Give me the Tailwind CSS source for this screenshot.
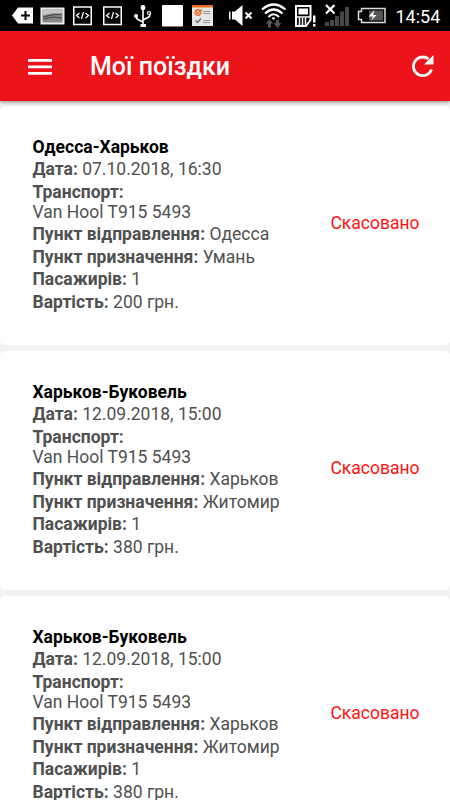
<!DOCTYPE html>
<html lang="uk">

<head>
    <meta charset="UTF-8">
    <meta name="viewport" content="width=device-width, initial-scale=1.0">
    <title>Мої поїздки</title>
    <script src="https://cdn.jsdelivr.net/npm/@tailwindcss/browser@4"></script>
</head>

<body class="bg-[#f2f2f2] font-[Roboto,sans-serif] h-screen overflow-hidden flex flex-col">
    <!-- status bar -->
    <div class="h-[31px] shrink-0 bg-black text-white flex items-center">
        <svg class="w-[290px] h-[31px] shrink-0" viewBox="0 0 290 31" fill="none">
            <path d="M12 15.500L18 7.500h15v16H18z" fill="#fff" />
            <path d="M25.500 11v9M21 15.500h9" stroke="#000" stroke-width="2" />
            <path d="M41.500 8.500h22v15h-22z" fill="#888" stroke="#eee" stroke-width="2" />
            <path d="M43 10h19v4l-8-1-11 2z" fill="#c8c8c8" />
            <path d="M43 17l9-2 10-1M43 19l10-2 9 1" stroke="#444" />
            <path d="M73.750 7h17.500v17.500H73.750zM103.750 7h17.500v17.500h-17.500z" stroke="#fff" stroke-width="1.500" />
            <path d="M79.500 13l-3 2.500 3 2.500M85.500 13l3 2.500-3 2.500M83.500 12l-2 7M109.500 13l-3 2.500 3 2.500M115.500 13l3 2.500-3 2.500M113.500 12l-2 7" stroke="#fff" stroke-width="1.200" />
            <path d="M143 7v19M143 22l-5-2.500q-2-1-2-3.500M143 20l5-2.500q2-1 2-3.500" stroke="#fff" stroke-width="1.600" />
            <path d="M140.500 9.500l2.500-4.500 2.500 4.500zM140.500 24h5.500v3h-5.500z" fill="#fff" />
            <circle cx="143" cy="7.500" r="2.400" fill="#fff" />
            <circle cx="136" cy="16" r="2" fill="#fff" />
            <circle cx="149" cy="13" r="1.500" stroke="#fff" stroke-width="1.200" />
            <rect x="162" y="5" width="21" height="21.500" rx="1" fill="#fff" />
            <path d="M192 5h21v21h-21z" fill="#e6e6e6" />
            <path d="M192 5h21v2.500h-21z" fill="#f26a1b" />
            <circle cx="198" cy="12.500" r="2.700" stroke="#f26a1b" stroke-width="1.500" />
            <path d="M196.500 12l1.500 1.500 4-4" stroke="#f26a1b" stroke-width="1.200" />
            <path d="M195.500 20.500l2 2 3.500-4" stroke="#666" stroke-width="1.200" />
            <path d="M203 11.500h7M203 13.500h7M203 20.500h7M203 22.500h7" stroke="#999" />
            <path d="M229 11.500h1.500v8H229zM232 11.500h3l7.500-6.500v21l-7.500-6.500h-3z" fill="#fff" />
            <path d="M245.500 12.500l6 6M251.500 12.500l-6 6" stroke="#fff" stroke-width="2" />
            <path d="M262 9.500q11.500-10 23.500 0M265 13.500q8.500-8 17.500 0M268.500 17q5-5.500 10.500 0" stroke="#fff" stroke-width="2.200" />
            <path d="M271.500 18q2-1.500 4 0l-2 2z" fill="#fff" />
            <path d="M265.500 23.500l4-4 4 4h-2.500v4h-3v-4zM273.500 23l4 5 4-5H279v-3h-3v3z" fill="#555" />
        </svg>
        <svg class="w-[96px] h-[31px] shrink-0" viewBox="290 0 96 31" fill="none">
            <path d="M296 6h14.500v14l-4.500 6h-10z" stroke="#fff" stroke-width="2" />
            <path d="M298.500 8.500h9.500v6h-9.500z" fill="#fff" />
            <path d="M296 17h14M299.500 18v8M302.500 18v8M305.500 18v7" stroke="#fff" stroke-width="1.500" />
            <path d="M313 15.500h2.500v7H313zM313 24h2.500v2.500H313z" fill="#fff" />
            <path d="M325 22h4v4h-4zM330 20h4v6h-4zM335 16h4v10h-4zM340 11.500h4V26h-4zM345 7h4v19h-4z" fill="#484848" />
            <path d="M326 5l8.500 8.500M334.500 5L326 13.500" stroke="#fff" stroke-width="2.200" />
            <path d="M361.500 8.500h23.500v14h-23.500v-3h-3v-8h3z" stroke="#ddd" stroke-width="1.500" />
            <path d="M369 10.500h14v10h-14z" fill="#555" />
            <path d="M374.500 10l-6 6.500h4.500l-2 4.500 5.500-6H373z" fill="#fff" />
        </svg>
        <span class="ml-[9.500px] pt-px text-[18px] leading-[31px]">14:54</span>
    </div>

    <!-- app bar -->
    <header class="relative z-10 h-[70px] shrink-0 bg-[#ec131a] text-white flex items-center shadow-[0_1px_4px_rgba(0,0,0,0.45)]">
        <svg class="ml-[28px] mt-px w-[24px] h-[16px]" viewBox="0 0 24 16" fill="#fff">
            <path d="M0 0h24v2.700H0zM0 6.500h24v2.700H0zM0 13h24v2.700H0z" />
        </svg>
        <h1 class="ml-[38px] pt-[2px] text-[25px] leading-[30px] font-medium">Мої поїздки</h1>
        <svg class="ml-auto mr-[16px] w-[24px] h-[24px]" viewBox="0 0 24 24" fill="none">
            <path d="M18.500 5A9.300 9.300 0 1 0 21.500 15.500" stroke="#fff" stroke-width="2.800" />
            <path d="M23.500 1v9.500H14z" fill="#fff" />
        </svg>
    </header>

    <!-- trips -->
    <main class="pt-[5px] flex flex-col gap-[6px] text-[17.500px] leading-[20px] text-[#505050]">
        <section class="h-[239px] shrink-0 bg-white rounded-[5px] pl-[32.500px] pr-[30.500px] pb-[3px] flex items-center justify-between">
            <div class="flex flex-col gap-[2.500px]">
                <h2 class="font-bold text-black">Одесса-Харьков</h2>
                <p><b>Дата:</b> 07.10.2018, 16:30</p>
                <p><b>Транспорт:</b><br>Van Hool T915 5493</p>
                <p><b>Пункт відправлення:</b> Одесса</p>
                <p><b>Пункт призначення:</b> Умань</p>
                <p><b>Пасажирів:</b> 1</p>
                <p><b>Вартість:</b> 200 грн.</p>
            </div>
            <span class="pb-[3px] text-[#ff1212]">Скасовано</span>
        </section>
        <section class="h-[239px] shrink-0 bg-white rounded-[5px] pl-[32.500px] pr-[30.500px] pb-[3px] flex items-center justify-between">
            <div class="flex flex-col gap-[2.500px]">
                <h2 class="font-bold text-black">Харьков-Буковель</h2>
                <p><b>Дата:</b> 12.09.2018, 15:00</p>
                <p><b>Транспорт:</b><br>Van Hool T915 5493</p>
                <p><b>Пункт відправлення:</b> Харьков</p>
                <p><b>Пункт призначення:</b> Житомир</p>
                <p><b>Пасажирів:</b> 1</p>
                <p><b>Вартість:</b> 380 грн.</p>
            </div>
            <span class="pb-[3px] text-[#ff1212]">Скасовано</span>
        </section>
        <section class="h-[239px] shrink-0 bg-white rounded-[5px] pl-[32.500px] pr-[30.500px] pb-[3px] flex items-center justify-between">
            <div class="flex flex-col gap-[2.500px]">
                <h2 class="font-bold text-black">Харьков-Буковель</h2>
                <p><b>Дата:</b> 12.09.2018, 15:00</p>
                <p><b>Транспорт:</b><br>Van Hool T915 5493</p>
                <p><b>Пункт відправлення:</b> Харьков</p>
                <p><b>Пункт призначення:</b> Житомир</p>
                <p><b>Пасажирів:</b> 1</p>
                <p><b>Вартість:</b> 380 грн.</p>
            </div>
            <span class="pb-[3px] text-[#ff1212]">Скасовано</span>
        </section>
    </main>
</body>

</html>
